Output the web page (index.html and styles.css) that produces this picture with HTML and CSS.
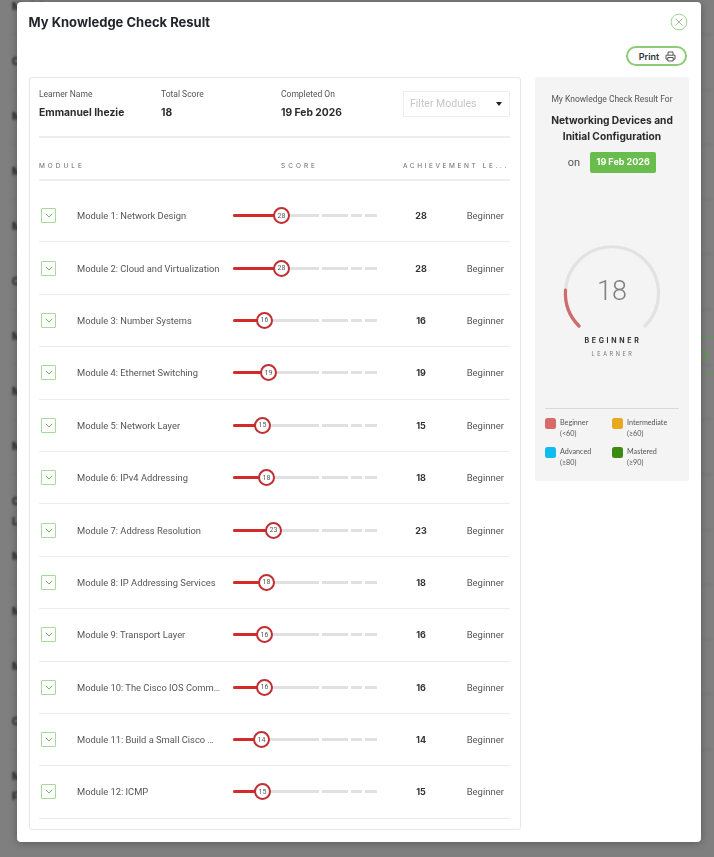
FILE: index.html
```html
<!DOCTYPE html>
<html lang="en">
<head>
<meta charset="utf-8">
<title>My Knowledge Check Result</title>
<link rel="stylesheet" href="styles.css">
</head>
<body>
<div class="backdrop">
  <div class="bg-row">Module</div><div class="bg-row">Checkpoint</div><div class="bg-row">Module</div><div class="bg-row">Module</div><div class="bg-row">Module</div><div class="bg-row">Checkpoint</div><div class="bg-row">Module</div><div class="bg-row">Module</div><div class="bg-row">Module</div><div class="bg-row">Checkpoint<br>Lab</div><div class="bg-row">Module</div><div class="bg-row">Module</div><div class="bg-row">Module</div><div class="bg-row">Checkpoint</div><div class="bg-row">Module<br>Final</div>
</div>
<div class="next-tab"><svg width="8" height="14" viewBox="0 0 8 14"><path d="M1 1l6 6-6 6" fill="none" stroke="#5e9a4e" stroke-width="1.6"/></svg></div>
<main class="modal">
  <header class="modal-head">
    <h1>My Knowledge Check Result</h1>
    <button class="close" aria-label="Close"><svg width="18" height="18" viewBox="0 0 18 18"><circle cx="9" cy="9" r="7.9" fill="none" stroke="#8fd082" stroke-width=".9"/><path d="M5.6 5.6l6.8 6.8M12.4 5.6l-6.8 6.8" stroke="#8fbb86" stroke-width=".9"/></svg></button>
  </header>
  <div class="print-row">
    <button class="print">Print
      <svg width="11" height="11" viewBox="0 0 11 11"><path d="M3 4V1h5v3M1 4.2h9v4H8.2M2.8 8.2H1v-4M2.8 6.5h5.4V10H2.8z" fill="none" stroke="#555" stroke-width="1"/></svg>
    </button>
  </div>
  <div class="body">
    <section class="card">
      <div class="meta">
        <div class="meta-item m1"><div class="label">Learner Name</div><div class="value">Emmanuel Ihezie</div></div>
        <div class="meta-item m2"><div class="label">Total Score</div><div class="value">18</div></div>
        <div class="meta-item m3"><div class="label">Completed On</div><div class="value">19 Feb 2026</div></div>
        <div class="filter"><span>Filter Modules</span><i class="caret"></i></div>
      </div>
      <div class="table-head">
        <div>MODULE</div><div>SCORE</div><div class="th-ach">ACHIEVEMENT LE...</div>
      </div>
      <div class="rows">
        <div class="row"><span class="exp"><svg width="8" height="5" viewBox="0 0 8 5"><path d="M.8.8L4 4 7.2.8" fill="none" stroke="#6fbf5c" stroke-width="1"/></svg></span><div class="name">Module 1: Network Design</div><div class="track"><b class="fill" style="width:48px"></b><i class="thumb" style="left:48px">28</i></div><div class="score">28</div><div class="level">Beginner</div></div>
        <div class="row"><span class="exp"><svg width="8" height="5" viewBox="0 0 8 5"><path d="M.8.8L4 4 7.2.8" fill="none" stroke="#6fbf5c" stroke-width="1"/></svg></span><div class="name">Module 2: Cloud and Virtualization</div><div class="track"><b class="fill" style="width:48px"></b><i class="thumb" style="left:48px">28</i></div><div class="score">28</div><div class="level">Beginner</div></div>
        <div class="row"><span class="exp"><svg width="8" height="5" viewBox="0 0 8 5"><path d="M.8.8L4 4 7.2.8" fill="none" stroke="#6fbf5c" stroke-width="1"/></svg></span><div class="name">Module 3: Number Systems</div><div class="track"><b class="fill" style="width:31px"></b><i class="thumb" style="left:31px">16</i></div><div class="score">16</div><div class="level">Beginner</div></div>
        <div class="row"><span class="exp"><svg width="8" height="5" viewBox="0 0 8 5"><path d="M.8.8L4 4 7.2.8" fill="none" stroke="#6fbf5c" stroke-width="1"/></svg></span><div class="name">Module 4: Ethernet Switching</div><div class="track"><b class="fill" style="width:35px"></b><i class="thumb" style="left:35px">19</i></div><div class="score">19</div><div class="level">Beginner</div></div>
        <div class="row"><span class="exp"><svg width="8" height="5" viewBox="0 0 8 5"><path d="M.8.8L4 4 7.2.8" fill="none" stroke="#6fbf5c" stroke-width="1"/></svg></span><div class="name">Module 5: Network Layer</div><div class="track"><b class="fill" style="width:29px"></b><i class="thumb" style="left:29px">15</i></div><div class="score">15</div><div class="level">Beginner</div></div>
        <div class="row"><span class="exp"><svg width="8" height="5" viewBox="0 0 8 5"><path d="M.8.8L4 4 7.2.8" fill="none" stroke="#6fbf5c" stroke-width="1"/></svg></span><div class="name">Module 6: IPv4 Addressing</div><div class="track"><b class="fill" style="width:33px"></b><i class="thumb" style="left:33px">18</i></div><div class="score">18</div><div class="level">Beginner</div></div>
        <div class="row"><span class="exp"><svg width="8" height="5" viewBox="0 0 8 5"><path d="M.8.8L4 4 7.2.8" fill="none" stroke="#6fbf5c" stroke-width="1"/></svg></span><div class="name">Module 7: Address Resolution</div><div class="track"><b class="fill" style="width:40px"></b><i class="thumb" style="left:40px">23</i></div><div class="score">23</div><div class="level">Beginner</div></div>
        <div class="row"><span class="exp"><svg width="8" height="5" viewBox="0 0 8 5"><path d="M.8.8L4 4 7.2.8" fill="none" stroke="#6fbf5c" stroke-width="1"/></svg></span><div class="name">Module 8: IP Addressing Services</div><div class="track"><b class="fill" style="width:33px"></b><i class="thumb" style="left:33px">18</i></div><div class="score">18</div><div class="level">Beginner</div></div>
        <div class="row"><span class="exp"><svg width="8" height="5" viewBox="0 0 8 5"><path d="M.8.8L4 4 7.2.8" fill="none" stroke="#6fbf5c" stroke-width="1"/></svg></span><div class="name">Module 9: Transport Layer</div><div class="track"><b class="fill" style="width:31px"></b><i class="thumb" style="left:31px">16</i></div><div class="score">16</div><div class="level">Beginner</div></div>
        <div class="row"><span class="exp"><svg width="8" height="5" viewBox="0 0 8 5"><path d="M.8.8L4 4 7.2.8" fill="none" stroke="#6fbf5c" stroke-width="1"/></svg></span><div class="name">Module 10: The Cisco IOS Command Line</div><div class="track"><b class="fill" style="width:31px"></b><i class="thumb" style="left:31px">16</i></div><div class="score">16</div><div class="level">Beginner</div></div>
        <div class="row"><span class="exp"><svg width="8" height="5" viewBox="0 0 8 5"><path d="M.8.8L4 4 7.2.8" fill="none" stroke="#6fbf5c" stroke-width="1"/></svg></span><div class="name">Module 11: Build a Small Cisco Network</div><div class="track"><b class="fill" style="width:28px"></b><i class="thumb" style="left:28px">14</i></div><div class="score">14</div><div class="level">Beginner</div></div>
        <div class="row"><span class="exp"><svg width="8" height="5" viewBox="0 0 8 5"><path d="M.8.8L4 4 7.2.8" fill="none" stroke="#6fbf5c" stroke-width="1"/></svg></span><div class="name">Module 12: ICMP</div><div class="track"><b class="fill" style="width:29px"></b><i class="thumb" style="left:29px">15</i></div><div class="score">15</div><div class="level">Beginner</div></div>
      </div>
    </section>
    <aside class="side">
      <p class="side-intro">My Knowledge Check Result For</p>
      <h2>Networking Devices and<br>Initial Configuration</h2>
      <div class="on-line"><span class="on">on</span><span class="badge">19 Feb 2026</span></div>
      <div class="gauge">
        <svg width="100" height="90" viewBox="0 0 100 90">
          <path d="M17 84 A46.5 46.5 0 1 1 83 84" fill="none" stroke="#e2e2e2" stroke-width="3.2" stroke-linecap="round"/>
          <path d="M17 84 A46.5 46.5 0 0 1 3.5 48" fill="none" stroke="#cf6b6b" stroke-width="3.2" stroke-linecap="round"/>
        </svg>
        <span class="gauge-num">18</span>
      </div>
      <div class="g-level">BEGINNER</div>
      <div class="g-sub">LEARNER</div>
      <div class="legend">
        <div class="lg"><i class="sw red"></i><span>Beginner<br>(&lt;60)</span></div>
        <div class="lg"><i class="sw amber"></i><span>Intermediate<br>(≥60)</span></div>
        <div class="lg"><i class="sw blue"></i><span>Advanced<br>(≥80)</span></div>
        <div class="lg"><i class="sw green"></i><span>Mastered<br>(≥90)</span></div>
      </div>
    </aside>
  </div>
</main>
</body>
</html>
```
FILE: styles.css
```css
* { box-sizing: border-box; }
html, body { margin: 0; height: 100%; }
body {
  position: relative;
  width: 714px;
  height: 857px;
  overflow: hidden;
  background: #7f7f7f;
  font-family: Inter, Roboto, "Liberation Sans", sans-serif;
  color: #333;
  filter: blur(0.35px);
}
.backdrop { margin-top: -21px; padding-left: 12px; filter: blur(.8px); }
.bg-row {
  height: 55px;
  padding-top: 17px;
  border-top: 1px solid #797979;
  font: 700 11px/20px Roboto, sans-serif;
  color: #1f1f1f;
}
.next-tab {
  position: absolute;
  left: 701px;
  top: 336px;
  width: 13px;
  height: 38px;
  display: flex;
  align-items: center;
  justify-content: flex-start;
  border-top: 1px solid #5e9a4e;
  border-bottom: 1px solid #5e9a4e;
}
.modal {
  position: absolute;
  left: 17px;
  top: 2px;
  width: 684px;
  height: 840px;
  background: #fff;
  border-radius: 4px;
  box-shadow: 0 1px 8px rgba(0,0,0,.3);
  padding: 0 12px;
}
.modal-head {
  height: 41px;
  padding-top: 11px;
  display: flex;
  justify-content: space-between;
  align-items: flex-start;
}
h1 { margin: 0 0 0 -.5px; font-size: 13px; line-height: 18px; font-weight: 700; color: #22262b; }
.close { width: 18px; height: 18px; padding: 0; margin-right: 1.5px; border: 0; background: none; display: block; }
.print-row { height: 34px; display: flex; justify-content: flex-end; padding-right: 2px; }
.print {
  width: 61px; height: 20px; margin-top: 3px; padding: 0 0 0 2px;
  display: flex; align-items: center; justify-content: center; gap: 6px;
  border: 2px solid #8bcb7a; border-radius: 10px; background: #fff;
  font: 600 9px Inter, sans-serif; color: #333;
}
.body { display: flex; gap: 14px; align-items: flex-start; }
.card {
  width: 492px; height: 753px; padding: 0 10px 0 9px;
  border: 1px solid #e6e6e6; border-radius: 3px;
}
.meta { position: relative; height: 60px; border-bottom: 2px solid #eee; display: flex; }
.meta-item { padding-top: 9.5px; }
.m1 { width: 122px; }
.m2 { width: 120px; }
.m3 { width: 122px; }
.label { font: 400 8.5px/12px Roboto, sans-serif; color: #555; }
.value { margin-top: 6.5px; font-size: 10.3px; line-height: 12px; font-weight: 700; color: #2b2b2b; white-space: nowrap; }
.filter {
  width: 107px; height: 26px; margin-top: 12.5px;
  display: flex; align-items: center; justify-content: space-between;
  padding: 0 7px 0 6px;
  border: 1px solid #eee; font: 400 10.5px Roboto, sans-serif; color: #c6c6c6;
}
.caret { width: 0; height: 0; border: 3.5px solid transparent; border-top: 4px solid #222; border-bottom: 0; }
.table-head {
  height: 43px; display: grid; grid-template-columns: 242px 122px 1fr; align-items: center;
  border-bottom: 2px solid #eee; padding-top: 14px;
  font: 400 6.5px Inter, sans-serif; letter-spacing: 3px; color: #666; white-space: nowrap;
}
.th-ach { overflow: hidden; letter-spacing: 2.6px; }
.rows { padding-top: 9px; }
.row {
  height: 52.4px; display: grid; align-items: center;
  grid-template-columns: 38px 156px 169px 38px 1fr;
  border-bottom: 1px solid #ececec;
}
.exp {
  width: 15px; height: 15px; margin-left: 2px; display: flex; align-items: center; justify-content: center;
  border: 1px solid #a8d89c; border-radius: 1px;
}
.name {
  padding-right: 13px; font: 400 9.35px Roboto, sans-serif; color: #555;
  white-space: nowrap; overflow: hidden; text-overflow: ellipsis;
}
.track {
  position: relative; width: 144px; height: 3px;
  background: linear-gradient(90deg, #e0e0e0 0 86px, transparent 86px 89px, #e0e0e0 89px 115px, transparent 115px 118px, #e0e0e0 118px 129px, transparent 129px 132px, #e0e0e0 132px);
}
.fill { display: block; height: 3px; background: #d32a2a; border-radius: 2px 0 0 2px; }
.thumb {
  position: absolute; top: -7px; width: 17px; height: 17px; margin-left: -8px; display: flex; align-items: center; justify-content: center;
  border: 2px solid #bf2f33; border-radius: 50%; background: #fff;
  font: normal 400 7px Roboto, sans-serif; color: #555;
}
.score { text-align: center; font-size: 9px; font-weight: 700; color: #333; }
.level { text-align: right; padding-right: 6px; font: 400 9.5px Roboto, sans-serif; color: #555; }
.side { width: 154px; height: 404px; padding-top: 16px; background: #f4f4f4; text-align: center; border-radius: 2px; }
.side-intro { margin: 0; font: 400 8.5px/12px Roboto, sans-serif; color: #555; }
h2 { margin: 7px 0 0; font: 700 10.2px/16px Inter, sans-serif; color: #2b2b2b; }
.on-line { margin-top: 8px; height: 21px; display: flex; justify-content: center; align-items: center; gap: 10px; }
.on { font: 400 11px Roboto, sans-serif; color: #555; }
.badge { width: 66px; height: 21px; border-radius: 2px; background: #69bd4d; color: #fff; font: 700 9px/20px Inter, sans-serif; }
.gauge { position: relative; width: 100px; height: 90px; margin: 69px auto 0; }
.gauge svg { display: block; }
.gauge-num { position: absolute; left: 0; right: 0; top: 33px; text-align: center; font: 300 27px/32px Roboto, sans-serif; color: #808080; }
.g-level { margin-top: 3px; font: 700 7px/12px Inter, sans-serif; letter-spacing: 2.7px; color: #333; padding-left: 2px; }
.g-sub { margin-top: 2px; font: 400 5.5px/10px Inter, sans-serif; letter-spacing: 2.6px; color: #777; padding-left: 2px; }
.legend {
  margin: 49px 10px 0; padding-top: 9px; border-top: 1px solid #d9d9d9;
  display: grid; grid-template-columns: 67px 1fr; row-gap: 8px; text-align: left;
}
.lg { display: flex; gap: 4px; font: 400 7.2px/10.5px Lato, sans-serif; color: #555; white-space: nowrap; }
.sw { flex: none; width: 11px; height: 11px; border-radius: 2.5px; }
.red { background: #d96a6a; }
.amber { background: #e8a820; }
.blue { background: #11bbee; }
.green { background: #3a8a14; }
```
